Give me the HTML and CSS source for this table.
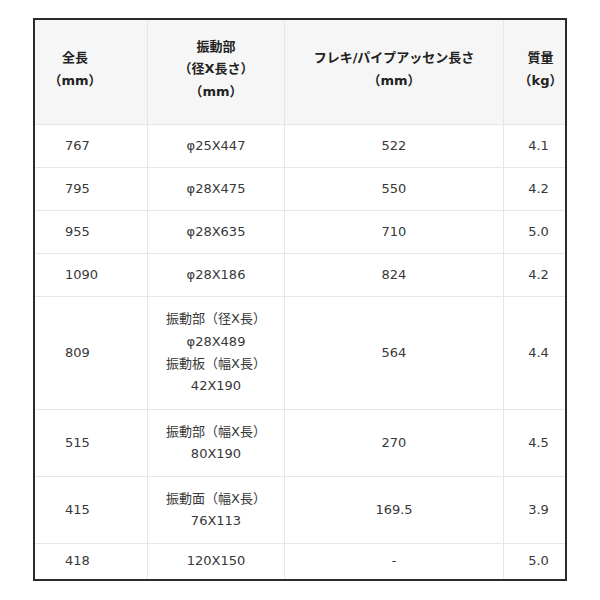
FILE: index.html
```html
<!DOCTYPE html>
<html lang="ja">
<head>
<meta charset="utf-8">
<link rel="stylesheet" href="styles.css">
</head>
<body>
<div class="frame">
<table class="spec">
  <colgroup>
    <col class="c1"><col class="c2"><col class="c3"><col class="c4">
  </colgroup>
  <thead>
    <tr class="head">
      <th class="h1">全長<br>（mm）</th>
      <th>振動部<br>（径X長さ）<br>（mm）</th>
      <th>フレキ/パイプアッセン長さ<br>（mm）</th>
      <th class="h4">質量<br>（kg）</th>
    </tr>
  </thead>
  <tbody>
    <tr class="r1"><td class="d1">767</td><td>φ25X447</td><td>522</td><td class="d4">4.1</td></tr>
    <tr class="r1"><td class="d1">795</td><td>φ28X475</td><td>550</td><td class="d4">4.2</td></tr>
    <tr class="r1"><td class="d1">955</td><td>φ28X635</td><td>710</td><td class="d4">5.0</td></tr>
    <tr class="r1"><td class="d1">1090</td><td>φ28X186</td><td>824</td><td class="d4">4.2</td></tr>
    <tr class="r4"><td class="d1">809</td><td>振動部（径X長）<br>φ28X489<br>振動板（幅X長）<br>42X190</td><td>564</td><td class="d4">4.4</td></tr>
    <tr class="r2"><td class="d1">515</td><td>振動部（幅X長）<br>80X190</td><td>270</td><td class="d4">4.5</td></tr>
    <tr class="r2"><td class="d1">415</td><td>振動面（幅X長）<br>76X113</td><td>169.5</td><td class="d4">3.9</td></tr>
    <tr class="last"><td class="d1">418</td><td>120X150</td><td>-</td><td class="d4">5.0</td></tr>
  </tbody>
</table>
</div>
</body>
</html>
```

FILE: styles.css
```css
html, body {
  margin: 0;
  padding: 0;
  background: #ffffff;
}
body {
  padding: 18px 0 0 33px;
  font-family: "DejaVu Sans", "Noto Sans CJK JP", sans-serif;
  font-size: 13px;
  color: #383838;
}
.frame {
  width: 530px;
  border: 2px solid #2a2a2a;
}
.spec {
  width: 530px;
  border-collapse: separate;
  border-spacing: 0;
  table-layout: fixed;
  line-height: 22.4px;
}
.c1 { width: 113px; }
.c2 { width: 137px; }
.c3 { width: 219px; }
.c4 { width: 61px; }
.spec th, .spec td {
  padding: 0;
  text-align: center;
  vertical-align: middle;
  border-right: 1px solid #e6e6e6;
  border-bottom: 1px solid #e6e6e6;
}
.spec th:last-child, .spec td:last-child { border-right: none; }
.spec tr.last td { border-bottom: none; }
.spec th {
  background: #f6f6f6;
  font-weight: bold;
  color: #222222;
  padding-bottom: 5px;
}
.head th { height: 99px; }
.r1 td { height: 42px; }
.r4 td { height: 112px; }
.r2 td { height: 66px; }
.last td { height: 35px; }
.spec .h1 { padding-right: 32px; }
.spec .h4 { padding-left: 12px; }
.spec .d1 { text-align: left; padding-left: 30px; }
.spec .d4 { padding-left: 8px; }
```
